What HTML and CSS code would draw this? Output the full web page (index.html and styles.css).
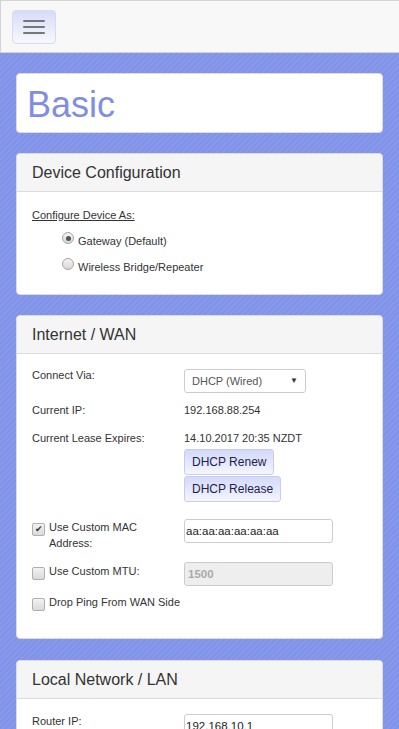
FILE: index.html
```html
<!DOCTYPE html>
<html lang="en">
<head>
    <meta charset="UTF-8">
    <meta name="viewport" content="width=device-width, initial-scale=1.0">
    <title>Basic</title>
    <link rel="stylesheet" href="styles.css">
</head>
<body>
    <div class="navbar">
        <button class="nav-toggle" type="button" aria-label="Menu">
            <span class="bar"></span>
            <span class="bar"></span>
            <span class="bar"></span>
        </button>
    </div>

    <div class="main">
        <div class="panel title-panel">
            <h1>Basic</h1>
        </div>

        <div class="panel device-panel">
            <div class="panel-heading">Device Configuration</div>
            <div class="panel-body device-body">
                <div class="group-label">Configure Device As:</div>
                <label class="radio-row"><span class="radio checked"></span>Gateway (Default)</label>
                <label class="radio-row"><span class="radio"></span>Wireless Bridge/Repeater</label>
            </div>
        </div>

        <div class="panel">
            <div class="panel-heading">Internet / WAN</div>
            <div class="panel-body wan-body">
                <div class="form-row">
                    <div class="form-label">Connect Via:</div>
                    <div class="form-value">
                        <div class="select">DHCP (Wired)<span class="caret">&#9660;</span></div>
                    </div>
                </div>
                <div class="form-row">
                    <div class="form-label">Current IP:</div>
                    <div class="form-value">192.168.88.254</div>
                </div>
                <div class="form-row lease-row">
                    <div class="form-label">Current Lease Expires:</div>
                    <div class="form-value">
                        14.10.2017 20:35 NZDT
                        <div class="btn-stack">
                            <button class="btn" type="button">DHCP Renew</button>
                            <button class="btn" type="button">DHCP Release</button>
                        </div>
                    </div>
                </div>
                <div class="form-row check-row mac-row">
                    <div class="form-label"><span class="checkbox checked">&#10004;</span><span class="check-text">Use Custom MAC Address:</span></div>
                    <div class="form-value"><div class="text-input">aa:aa:aa:aa:aa:aa</div></div>
                </div>
                <div class="form-row check-row mtu-row">
                    <div class="form-label"><span class="checkbox"></span><span class="check-text">Use Custom MTU:</span></div>
                    <div class="form-value"><div class="text-input disabled">1500</div></div>
                </div>
                <div class="form-row check-row last-row">
                    <div class="form-label wide"><span class="checkbox"></span><span class="check-text">Drop Ping From WAN Side</span></div>
                </div>
            </div>
        </div>

        <div class="panel">
            <div class="panel-heading">Local Network / LAN</div>
            <div class="panel-body lan-body">
                <div class="form-row">
                    <div class="form-label">Router IP:</div>
                    <div class="form-value"><div class="text-input">192.168.10.1</div></div>
                </div>
            </div>
        </div>
    </div>
</body>
</html>
```

FILE: styles.css
```css
html, body {
    margin: 0;
    padding: 0;
}
body {
    font-family: "Liberation Sans", Arial, sans-serif;
    font-size: 11px;
    line-height: 14px;
    color: #333;
    background-color: #8192e9;
    background-image: repeating-linear-gradient(135deg, rgba(255,255,255,0.06) 0 2px, rgba(255,255,255,0) 2px 4px);
    height: 729px;
    overflow: hidden;
}
.navbar {
    height: 53px;
    background: #f8f8f8;
    border: 1px solid #d4d4d4;
    border-right: none;
    box-sizing: border-box;
    padding: 9px 11px;
}
.nav-toggle {
    width: 44px;
    height: 34px;
    padding: 0;
    border: 1px solid #d6daf2;
    border-radius: 4px;
    background: linear-gradient(#d7ddf8, #f7f8fe);
    display: flex;
    flex-direction: column;
    align-items: center;
    justify-content: center;
    gap: 4px;
}
.nav-toggle .bar {
    display: block;
    width: 22px;
    height: 2px;
    background: #777;
    border-radius: 1px;
}
.main {
    padding: 20px 16px;
}
.panel {
    background: #fff;
    border: 1px solid #dcdcdc;
    border-radius: 4px;
    margin-bottom: 21px;
    overflow: hidden;
}
.title-panel {
    height: 60px;
    box-sizing: border-box;
    margin-bottom: 20px;
}
.device-panel {
    margin-bottom: 20px;
}
.title-panel h1 {
    margin: 0;
    padding: 9px 10px 5px;
    font-size: 36px;
    font-weight: normal;
    line-height: 44px;
    color: #7f8ee3;
}
.panel-heading {
    height: 37px;
    line-height: 37px;
    padding: 0 15px;
    background: #f5f5f5;
    border-bottom: 1px solid #dcdcdc;
    font-size: 16px;
    color: #333;
}
.panel-body {
    padding: 14px 15px 27px;
}
.device-body {
    padding: 16px 15px 8px;
}
.lan-body {
    padding-top: 15px;
}
.group-label {
    text-decoration: underline;
    margin-bottom: 12px;
}
.radio-row {
    display: flex;
    align-items: flex-start;
    margin-left: 30px;
    height: 26px;
}
.radio {
    flex: none;
    width: 10px;
    height: 10px;
    border-radius: 50%;
    border: 1px solid #a6a6a6;
    background: linear-gradient(#f4f4f4, #d8d8d8);
    margin: -2px 4px 0 0;
    position: relative;
}
.radio.checked::after {
    content: "";
    position: absolute;
    left: 2.5px;
    top: 2.5px;
    width: 5px;
    height: 5px;
    border-radius: 50%;
    background: #555;
}
.form-row {
    display: grid;
    grid-template-columns: 152px 1fr;
    min-height: 18px;
    margin-bottom: 10px;
}
.form-value {
    min-width: 0;
}
.select {
    width: 122px;
    height: 24px;
    box-sizing: border-box;
    margin-top: 1px;
    border: 1px solid #ccc;
    border-radius: 3px;
    padding: 0 7px;
    line-height: 22px;
    font-size: 11px;
    position: relative;
    color: #555;
}
.caret {
    position: absolute;
    right: 7px;
    top: 0;
    font-size: 8px;
    color: #333;
}
.lease-row {
    margin-bottom: 17px;
}
.btn-stack {
    display: flex;
    flex-direction: column;
    align-items: flex-start;
    margin-top: 4px;
}
.btn {
    font-family: inherit;
    font-size: 12px;
    color: #1e1e4a;
    height: 26px;
    padding: 0 7px;
    border: 1px solid #c8cdee;
    border-radius: 3px;
    background: linear-gradient(#d3d9fa, #f4f5fe);
    margin-bottom: 1px;
}
.btn:last-child {
    margin-bottom: 0;
}
.check-row .form-label {
    display: flex;
    align-items: flex-start;
}
.check-row .form-label.wide {
    grid-column: 1 / 3;
}
.checkbox {
    flex: none;
    width: 11px;
    height: 11px;
    border: 1px solid #b0b0b0;
    border-radius: 2px;
    background: linear-gradient(#f2f2f2, #dadada);
    margin: 4px 4px 0 0;
    font-size: 9px;
    line-height: 11px;
    text-align: center;
    color: #333;
}
.check-text {
    line-height: 16px;
    padding-right: 20px;
}
.mac-row {
    margin-bottom: 11px;
}
.mtu-row {
    margin-bottom: 8px;
}
.mtu-row .form-label {
    padding-top: 1px;
}
.last-row {
    margin-bottom: 0;
    min-height: 16px;
}
.text-input {
    width: 149px;
    height: 24px;
    box-sizing: border-box;
    border: 1px solid #ccc;
    border-radius: 3px;
    padding: 0 1px;
    line-height: 22px;
    font-size: 11.5px;
    color: #222;
}
.text-input.disabled {
    background: #eee;
    color: #aaa;
    font-weight: bold;
    padding-left: 3px;
}
```
